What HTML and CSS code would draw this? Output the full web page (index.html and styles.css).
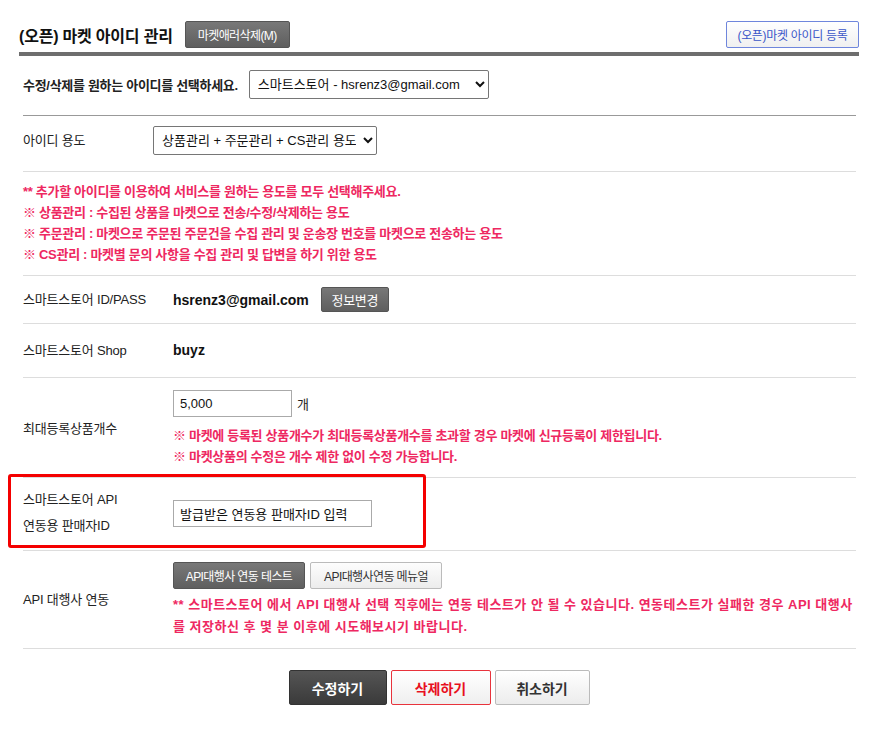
FILE: index.html
```html
<!DOCTYPE html>
<html lang="ko">
<head>
    <meta charset="UTF-8">
    <meta name="viewport" content="width=device-width, initial-scale=1.0">
    <title>(오픈) 마켓 아이디 관리</title>
    <link rel="stylesheet" href="styles.css">
</head>
<body>
    <div class="page">
        <div class="title-bar">
            <h2 class="title">(오픈) 마켓 아이디 관리</h2>
            <button class="btn btn-dark btn-error">마켓애러삭제(M)</button>
            <button class="btn btn-blue">(오픈)마켓 아이디 등록</button>
        </div>

        <div class="form-table">
            <div class="row row-pick">
                <div class="pick-label">수정/삭제를 원하는 아이디를 선택하세요.</div>
                <select class="select select-account">
                    <option>스마트스토어 - hsrenz3@gmail.com</option>
                </select>
            </div>

            <div class="row row-usage">
                <div class="label label-narrow">아이디 용도</div>
                <select class="select select-usage">
                    <option>상품관리 + 주문관리 + CS관리 용도</option>
                </select>
            </div>

            <div class="row row-notes">
                <div class="notes">
                    <p>** 추가할 아이디를 이용하여 서비스를 원하는 용도를 모두 선택해주세요.</p>
                    <p>※ 상품관리 : 수집된 상품을 마켓으로 전송/수정/삭제하는 용도</p>
                    <p>※ 주문관리 : 마켓으로 주문된 주문건을 수집 관리 및 운송장 번호를 마켓으로 전송하는 용도</p>
                    <p>※ CS관리 : 마켓별 문의 사항을 수집 관리 및 답변을 하기 위한 용도</p>
                </div>
            </div>

            <div class="row row-id">
                <div class="label">스마트스토어 ID/PASS</div>
                <div class="value">
                    <strong class="strong">hsrenz3@gmail.com</strong>
                    <button class="btn btn-dark btn-change">정보변경</button>
                </div>
            </div>

            <div class="row row-shop">
                <div class="label">스마트스토어 Shop</div>
                <div class="value"><strong class="strong">buyz</strong></div>
            </div>

            <div class="row row-max">
                <div class="label">최대등록상품개수</div>
                <div class="value value-stack">
                    <div class="inline">
                        <input class="input input-count" type="text" value="5,000">
                        <span class="unit">개</span>
                    </div>
                    <div class="notes notes-sub">
                        <p>※ 마켓에 등록된 상품개수가 최대등록상품개수를 초과할 경우 마켓에 신규등록이 제한됩니다.</p>
                        <p>※ 마켓상품의 수정은 개수 제한 없이 수정 가능합니다.</p>
                    </div>
                </div>
            </div>

            <div class="row row-api">
                <div class="highlight"></div>
                <div class="label label-two">스마트스토어 API<br>연동용 판매자ID</div>
                <div class="value">
                    <input class="input input-seller" type="text" value="발급받은 연동용 판매자ID 입력">
                </div>
            </div>

            <div class="row row-agent">
                <div class="label">API 대행사 연동</div>
                <div class="value value-stack">
                    <div class="inline">
                        <button class="btn btn-dark btn-api">API대행사 연동 테스트</button>
                        <button class="btn btn-light btn-api">API대행사연동 메뉴얼</button>
                    </div>
                    <div class="notes notes-agent">
                        <p>** 스마트스토어 에서 API 대행사 선택 직후에는 연동 테스트가 안 될 수 있습니다. 연동테스트가 실패한 경우 API 대행사를 저장하신 후 몇 분 이후에 시도해보시기 바랍니다.</p>
                    </div>
                </div>
            </div>
        </div>

        <div class="actions">
            <button class="btn-big big-save">수정하기</button>
            <button class="btn-big big-delete">삭제하기</button>
            <button class="btn-big big-cancel">취소하기</button>
        </div>
    </div>
</body>
</html>
```

FILE: styles.css
```css
* {
    margin: 0;
    padding: 0;
    box-sizing: border-box;
}

body {
    font-family: 'Liberation Sans', 'Noto Sans CJK KR', sans-serif;
    font-size: 13px;
    color: #222;
    background: #fff;
}

.page {
    width: 840px;
    margin-left: 19px;
}

/* title */
.title-bar {
    display: flex;
    align-items: center;
    padding: 21px 0 4px;
    border-bottom: 4px solid #6e6e6e;
}

.title {
    font-size: 16px;
    font-weight: bold;
    color: #111;
    letter-spacing: -0.2px;
    margin-right: 12px;
}

.btn {
    font-family: 'Liberation Sans', 'Noto Sans CJK KR', sans-serif;
    font-size: 12px;
    height: 27px;
    border-radius: 2px;
    cursor: pointer;
    letter-spacing: -0.6px;
}

.btn-dark {
    color: #fff;
    background: linear-gradient(#787878, #5f5f5f);
    border: 1px solid #555;
}

.btn-light {
    color: #333;
    background: linear-gradient(#fdfdfd, #ececec);
    border: 1px solid #bbb;
}

.btn-error {
    width: 105px;
}

.btn-blue {
    margin-left: auto;
    width: 133px;
    color: #3b56c8;
    background: linear-gradient(#fff, #f0f0f0);
    border: 1px solid #6f86dc;
    letter-spacing: -0.3px;
}

/* rows */
.form-table {
    margin: 0 3px 0 4px;
}

.row {
    display: flex;
    align-items: center;
    border-bottom: 1px solid #ddd;
    position: relative;
}

.label {
    width: 150px;
    flex-shrink: 0;
    line-height: 20px;
    letter-spacing: -0.2px;
}

.label-narrow {
    width: 130px;
}

.label-two {
    line-height: 26px;
}

.value {
    display: flex;
    align-items: center;
    flex: 1;
}

.value-stack {
    flex-direction: column;
    align-items: flex-start;
}

.inline {
    display: flex;
    align-items: center;
}

.strong {
    font-size: 14px;
    font-weight: bold;
    color: #111;
}

.row-pick {
    padding: 14px 0 16px;
    border-bottom-color: #999;
}

.pick-label {
    font-weight: bold;
    letter-spacing: -0.3px;
    margin-right: 11px;
}

.row-usage {
    padding: 10px 0 16px;
}

.row-notes {
    padding: 9px 0 10px;
}

.row-id {
    padding: 11px 0;
}

.row-shop {
    padding: 16px 0;
    line-height: 21px;
}

.row-max {
    padding: 12px 0 10px;
}

.row-api {
    padding: 9px 0 11px;
}

.row-agent {
    padding: 11px 0 10px;
}

/* fields */
.select {
    font-family: 'Liberation Sans', 'Noto Sans CJK KR', sans-serif;
    font-size: 13px;
    color: #111;
    height: 29px;
    padding: 0 4px;
    border: 1px solid #767676;
    border-radius: 2px;
    background: #fff;
}

.select-account {
    width: 240px;
}

.select-usage {
    width: 224px;
}

.input {
    font-family: 'Liberation Sans', 'Noto Sans CJK KR', sans-serif;
    font-size: 13px;
    color: #111;
    height: 27px;
    padding: 0 6px;
    border: 1px solid #aaa;
}

.input-count {
    width: 119px;
}

.input-seller {
    width: 199px;
}

.unit {
    margin-left: 5px;
    font-size: 13px;
}

.btn-change {
    width: 68px;
    height: 25px;
    margin-left: 12px;
    font-size: 13px;
    letter-spacing: -0.3px;
}

.btn-api {
    width: 132px;
    margin-right: 5px;
}

/* notes */
.notes {
    color: #ee2861;
    font-weight: bold;
    line-height: 21px;
    letter-spacing: -0.3px;
}

.notes-sub {
    margin-top: 8px;
}

.notes-agent {
    margin-top: 5px;
    line-height: 22px;
    letter-spacing: 0.5px;
}

/* red box on the seller id row */
.highlight {
    position: absolute;
    left: -15px;
    top: -4px;
    width: 418px;
    height: 74px;
    border: 3px solid #f40000;
    border-radius: 3px;
}

/* bottom buttons */
.actions {
    display: flex;
    justify-content: center;
    gap: 4px;
    margin-top: 21px;
}

.btn-big {
    font-family: 'Liberation Sans', 'Noto Sans CJK KR', sans-serif;
    font-size: 14px;
    font-weight: bold;
    height: 35px;
    border-radius: 2px;
    cursor: pointer;
}

.big-save {
    width: 98px;
    color: #fff;
    background: linear-gradient(#555, #3a3a3a);
    border: 1px solid #333;
}

.big-delete {
    width: 100px;
    color: #e8101e;
    background: linear-gradient(#fff, #efefef);
    border: 1px solid #e8333c;
}

.big-cancel {
    width: 95px;
    color: #333;
    background: linear-gradient(#fff, #ececec);
    border: 1px solid #bbb;
}
```
